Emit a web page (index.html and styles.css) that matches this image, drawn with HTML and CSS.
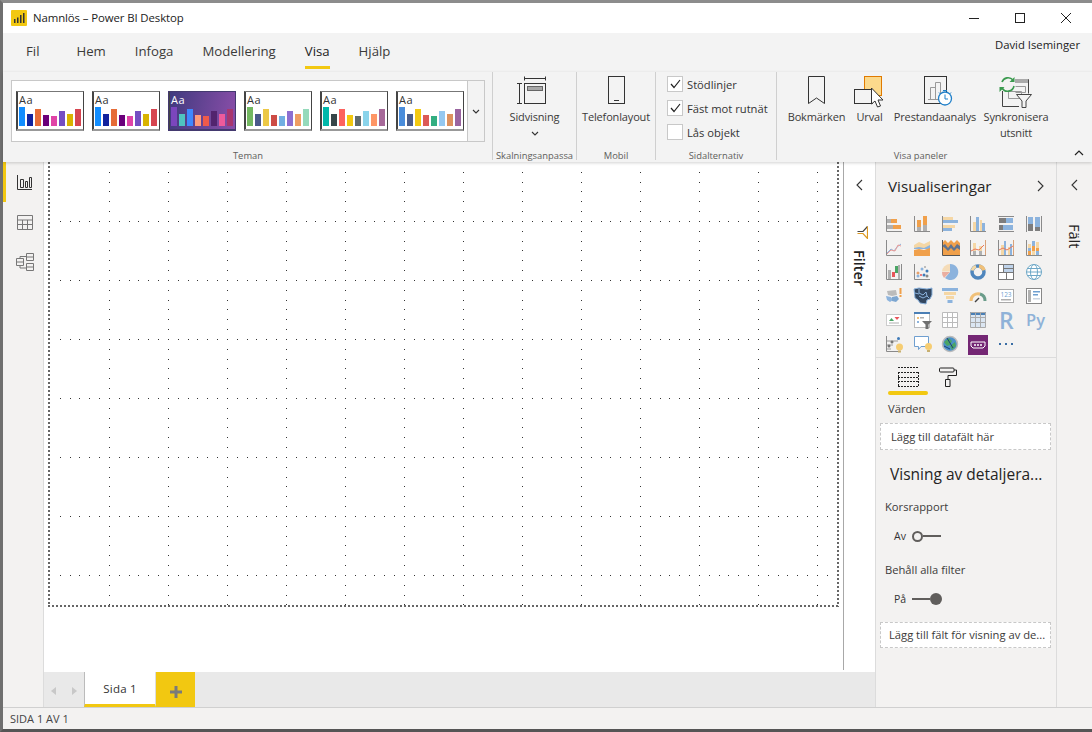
FILE: index.html
```html
<!DOCTYPE html>
<html>
<head>
  <title>Namnlös – Power BI Desktop</title>
  <link rel="stylesheet" href="styles.css">
</head>
<body>
<div class="window">

  <div class="titlebar">
    <svg class="app-logo" width="16" height="16" viewBox="0 0 16 16">
      <rect width="16" height="16" rx="1" fill="#f2c811"/>
      <path d="M3 9h1.500v4H3zM6 7.500h1.500V13H6zM9 5h1.500v8H9zM12 3h1.500v10H12z" fill="#333"/>
    </svg>
    <span class="app-title">Namnlös – Power BI Desktop</span>
    <div class="win-controls">
      <svg width="10" height="10" viewBox="0 0 10 10"><path d="M0 5.500h10" stroke="#222" fill="none"/></svg>
      <svg width="10" height="10" viewBox="0 0 10 10"><rect x=".5" y=".5" width="9" height="9" stroke="#222" fill="none"/></svg>
      <svg width="10" height="10" viewBox="0 0 10 10"><path d="M0 0l10 10M10 0L0 10" stroke="#222" fill="none"/></svg>
    </div>
  </div>

  <div class="tabs">
    <span class="tab tab-file">Fil</span>
    <span class="tab">Hem</span>
    <span class="tab">Infoga</span>
    <span class="tab">Modellering</span>
    <span class="tab active">Visa</span>
    <span class="tab">Hjälp</span>
    <span class="user">David Iseminger</span>
  </div>

  <div class="ribbon">
    <div class="group group-themes">
      <div class="group-body">
        <div class="gallery">
          <div class="gallery-items">
            <div class="thumb">
              <span class="aa">Aa</span>
              <div class="bars">
                <i style="height:19px;background:#118dff"></i><i style="height:12px;background:#12239e"></i><i style="height:17px;background:#e66c37"></i><i style="height:11px;background:#6b007b"></i><i style="height:10px;background:#e044a7"></i><i style="height:15px;background:#744ec2"></i><i style="height:12px;background:#d9b300"></i><i style="height:17px;background:#d64550"></i>
              </div>
            </div>
            <div class="thumb">
              <span class="aa">Aa</span>
              <div class="bars">
                <i style="height:19px;background:#118dff"></i><i style="height:12px;background:#12239e"></i><i style="height:17px;background:#e66c37"></i><i style="height:11px;background:#6b007b"></i><i style="height:10px;background:#e044a7"></i><i style="height:15px;background:#744ec2"></i><i style="height:12px;background:#d9b300"></i><i style="height:17px;background:#d64550"></i>
              </div>
            </div>
            <div class="thumb thumb-dark">
              <span class="aa">Aa</span>
              <div class="bars">
                <i style="height:19px;background:#7b46bd"></i><i style="height:12px;background:#4fc4c0"></i><i style="height:17px;background:#3f88ff"></i><i style="height:11px;background:#ff9a7a"></i><i style="height:10px;background:#ef5a4a"></i><i style="height:15px;background:#52246e"></i><i style="height:12px;background:#ee5a9b"></i><i style="height:17px;background:#a8366e"></i>
              </div>
            </div>
            <div class="thumb">
              <span class="aa">Aa</span>
              <div class="bars">
                <i style="height:19px;background:#73b761"></i><i style="height:12px;background:#4a588a"></i><i style="height:17px;background:#ecc846"></i><i style="height:11px;background:#cd4c46"></i><i style="height:10px;background:#71afe2"></i><i style="height:15px;background:#8d6fd1"></i><i style="height:12px;background:#ee9e64"></i><i style="height:17px;background:#95dabb"></i>
              </div>
            </div>
            <div class="thumb">
              <span class="aa">Aa</span>
              <div class="bars">
                <i style="height:19px;background:#01b8aa"></i><i style="height:12px;background:#374649"></i><i style="height:17px;background:#fd625e"></i><i style="height:11px;background:#f2c80f"></i><i style="height:10px;background:#5f6b6d"></i><i style="height:15px;background:#8ad4eb"></i><i style="height:12px;background:#fe9666"></i><i style="height:17px;background:#a66999"></i>
              </div>
            </div>
            <div class="thumb">
              <span class="aa">Aa</span>
              <div class="bars">
                <i style="height:19px;background:#4a8ddc"></i><i style="height:12px;background:#4c5d8a"></i><i style="height:17px;background:#f3c911"></i><i style="height:11px;background:#dc5b57"></i><i style="height:10px;background:#33ae81"></i><i style="height:15px;background:#95c8f0"></i><i style="height:12px;background:#dd915f"></i><i style="height:17px;background:#9a64a0"></i>
              </div>
            </div>
          </div>
          <div class="gallery-more">
            <svg width="8" height="5" viewBox="0 0 8 5"><path d="M1 1l3 3 3-3" class="chev"/></svg>
          </div>
        </div>
      </div>
      <div class="group-label">Teman</div>
    </div>

    <div class="group group-scale">
      <div class="group-body big-btn">
        <svg class="big-icon icon-scale" width="32" height="32" viewBox="0 0 32 32">
          <path d="M9.500 2.500h21M9.500.5v4M30.500.5v4M4.500 7.500v20M2 7.500h5M2 27.500h5" class="line"/>
          <rect x="9.500" y="7.500" width="21" height="20" class="line"/>
          <rect x="12.500" y="10.500" width="15" height="4" fill="#a8a8a8" stroke="#666"/>
        </svg>
        <span class="big-text">Sidvisning</span>
        <svg class="drop" width="8" height="5" viewBox="0 0 8 5"><path d="M1 1l3 3 3-3" class="chev"/></svg>
      </div>
      <div class="group-label">Skalningsanpassa</div>
    </div>

    <div class="group group-mobile">
      <div class="group-body big-btn">
        <svg class="big-icon" width="17" height="32" viewBox="0 0 17 32">
          <rect x=".5" y=".5" width="16" height="27" class="line"/>
          <path d="M6 24.500h5" class="line"/>
        </svg>
        <span class="big-text">Telefonlayout</span>
      </div>
      <div class="group-label">Mobil</div>
    </div>

    <div class="group group-page">
      <div class="group-body checks">
        <div class="check">
          <span class="box"><svg width="11" height="10" viewBox="0 0 11 10"><path d="M1 5l3 3.500L10 1" stroke="#222" stroke-width="1.200" fill="none"/></svg></span>
          Stödlinjer
        </div>
        <div class="check">
          <span class="box"><svg width="11" height="10" viewBox="0 0 11 10"><path d="M1 5l3 3.500L10 1" stroke="#222" stroke-width="1.200" fill="none"/></svg></span>
          Fäst mot rutnät
        </div>
        <div class="check">
          <span class="box"></span>
          Lås objekt
        </div>
      </div>
      <div class="group-label">Sidalternativ</div>
    </div>

    <div class="group group-panes">
      <div class="group-body pane-btns">
        <div class="big-btn btn-bookmark">
          <svg class="big-icon" width="17" height="32" viewBox="0 0 17 32">
            <path d="M.5.500h16v27l-8-5.500-8 5.500z" class="line"/>
          </svg>
          <span class="big-text">Bokmärken</span>
        </div>
        <div class="big-btn btn-select">
          <svg class="big-icon" width="32" height="32" viewBox="0 0 32 32">
            <rect x="10.500" y=".5" width="17" height="19" fill="#fbd98c" stroke="#e07a00"/>
            <rect x=".5" y="13.500" width="18" height="14" fill="#f3f3f3" stroke="#333"/>
            <path d="M17.500 12v16l3.500-3 2.500 6 3-1-2.500-6 5 0z" fill="#fff" stroke="#333"/>
          </svg>
          <span class="big-text">Urval</span>
        </div>
        <div class="big-btn btn-perf">
          <svg class="big-icon icon-perf" width="30" height="32" viewBox="0 0 30 32">
            <rect x=".5" y=".5" width="22" height="27" fill="#f3f3f3" stroke="#333"/>
            <path d="M6.500 23.500v-12h5v12M11.500 23.500v-17h5v17M4 23.500h15" stroke="#999" fill="none"/>
            <circle cx="21" cy="22.500" r="6.500" fill="#fff" stroke="#1f7fc9" stroke-width="1.300"/>
            <path d="M21 18.500v4.500h3M19 14.500h4M15 16.500l1.500 1.500M27 16.500L25.500 18" stroke="#1f7fc9" fill="none"/>
          </svg>
          <span class="big-text">Prestandaanalys</span>
        </div>
        <div class="big-btn btn-sync">
          <svg class="big-icon" width="34" height="32" viewBox="0 0 34 32">
            <path d="M16 3.500h13.500v14M3.500 15v15.500H20" stroke="#444" fill="none"/>
            <rect x="16" y="3" width="13" height="4" fill="#aaa"/>
            <path d="M16.500 10.500h10v6h-10M9.500 15.500h13v7h-13z" stroke="#999" fill="none"/>
            <path d="M3 6a6.500 6.500 0 0 1 11-2M15 10a6.500 6.500 0 0 1-12 2" stroke="#3a9a4e" stroke-width="1.600" fill="none"/>
            <path d="M15.500 1v5h-5zM.5 16v-5h5z" fill="#3a9a4e"/>
            <path d="M17.500 18.500h15l-5.500 6.500v6.500h-4V25z" fill="#f3f3f3" stroke="#444"/>
          </svg>
          <span class="big-text">Synkronisera<br>utsnitt</span>
        </div>
      </div>
      <div class="group-label">Visa paneler</div>
      <svg class="collapse" width="10" height="6" viewBox="0 0 10 6"><path d="M1 5l4-4 4 4" stroke="#222" stroke-width="1.200" fill="none"/></svg>
    </div>
  </div>

  <div class="main">
    <div class="rail">
      <div class="rail-item current">
        <svg width="15" height="15" viewBox="0 0 15 15"><path d="M.5 0v14.500H15M3.500 4.500h3v8h-3zM8.500 6.500h2v6h-2zM12.500 2.500h2v10h-2z" stroke="#333" fill="none"/></svg>
      </div>
      <div class="rail-item">
        <svg width="16" height="15" viewBox="0 0 16 15"><path d="M.5.500h15v14H.5zM.5 5h15M.5 9.500h15M5.500 5v9.500M10.500 5v9.500" stroke="#777" fill="none"/></svg>
      </div>
      <div class="rail-item">
        <svg width="18" height="18" viewBox="0 0 18 18"><path d="M.5 5.500h7v7h-7zM10.500.5h7v7h-7zM10.500 10.500h7v7h-7zM.5 9h7M10.500 4h7M10.500 14h7M4 5.500V3.500h6.500M4 12.500V15h6.500" stroke="#777" fill="none"/></svg>
      </div>
    </div>

    <div class="center">
      <div class="canvas-row">
        <div class="canvas">
          <div class="report-page">
            <svg class="page-grid" width="100%" height="100%">
              <defs>
                <pattern id="dots" x="58" y="58" width="59" height="59" patternUnits="userSpaceOnUse">
                  <path d="M0 0h1v1H0zM10 0h1v1h-1zM20 0h1v1h-1zM29 0h1v1h-1zM39 0h1v1h-1zM49 0h1v1h-1zM0 10h1v1H0zM0 20h1v1H0zM0 29h1v1H0zM0 39h1v1H0zM0 49h1v1H0z" fill="#333"/>
                </pattern>
              </defs>
              <rect width="100%" height="100%" fill="url(#dots)"/>
            </svg>
          </div>
        </div>
        <div class="filter-pane">
          <svg class="pane-chev" width="7" height="12" viewBox="0 0 7 12"><path d="M6 1L1 6l5 5" class="chev"/></svg>
          <svg class="filter-icon" width="11" height="13" viewBox="0 0 11 13">
            <path d="M.5 5.500H6L10.500.5" stroke="#444" stroke-width="1.200" fill="none"/>
            <path d="M10.500.5v12L6 7.500H.5" stroke="#dd9a22" stroke-width="1.200" fill="none"/>
          </svg>
          <span class="vertical filter-text">Filter</span>
        </div>
      </div>
      <div class="page-tabs">
        <div class="page-nav">
          <svg width="5" height="8" viewBox="0 0 5 8"><path d="M5 0v8L0 4z" fill="#c8c8c8"/></svg>
          <svg width="5" height="8" viewBox="0 0 5 8"><path d="M0 0v8l5-4z" fill="#c8c8c8"/></svg>
        </div>
        <div class="page-tab">Sida 1</div>
        <div class="page-add">
          <svg width="12" height="12" viewBox="0 0 12 12"><path d="M4.500 0h3v4.500H12v3H7.500V12h-3V7.500H0v-3h4.500z" fill="#7a7a7a"/></svg>
        </div>
      </div>
    </div>

    <div class="viz-pane">
      <div class="viz-head">
        <span>Visualiseringar</span>
        <svg width="7" height="12" viewBox="0 0 7 12"><path d="M1 1l5 5-5 5" class="chev"/></svg>
      </div>

      <div class="viz-grid">
        <svg viewBox="0 0 16 16"><path class="ax" d="M.5 0v15.500H16"/><rect class="g" x="1" y="3" width="4" height="4"/><rect class="o" x="5" y="3" width="6" height="4"/><rect class="g" x="1" y="9" width="6" height="4"/><rect class="o" x="7" y="9" width="8" height="4"/></svg>
        <svg viewBox="0 0 16 16"><path class="ax" d="M.5 0v15.500H16"/><rect class="o" x="3" y="4" width="4" height="7"/><rect class="g" x="3" y="11" width="4" height="4"/><rect class="o" x="9" y="0" width="4" height="9"/><rect class="g" x="9" y="9" width="4" height="6"/></svg>
        <svg viewBox="0 0 16 16"><path class="ax" d="M.5 0v16"/><rect class="y" x="1" y="1" width="10" height="3"/><rect class="b" x="1" y="4" width="15" height="3"/><rect class="y" x="1" y="9" width="12" height="3"/><rect class="b" x="1" y="12" width="9" height="3"/></svg>
        <svg viewBox="0 0 16 16"><path class="ax" d="M.5 0v15.500H16"/><rect class="y" x="3" y="6" width="3" height="9"/><rect class="b" x="6" y="1" width="3" height="14"/><rect class="y" x="10" y="4" width="2" height="11"/><rect class="b" x="12" y="7" width="3" height="8"/></svg>
        <svg viewBox="0 0 16 16"><path class="ax" d="M0 .5h16M0 15.500h16"/><rect class="d" x="1" y="2" width="7" height="5"/><rect class="b" x="8" y="2" width="7" height="5"/><rect class="d" x="1" y="9" width="4" height="5"/><rect class="b" x="5" y="9" width="10" height="5"/></svg>
        <svg viewBox="0 0 16 16"><path class="ax" d="M.5 0v16M15.500 0v16"/><rect class="b" x="2" y="1" width="5" height="7"/><rect class="d" x="2" y="8" width="5" height="7"/><rect class="b" x="9" y="1" width="5" height="10"/><rect class="d" x="9" y="11" width="5" height="4"/></svg>

        <svg viewBox="0 0 16 16"><path class="ax" d="M.5 0v15.500H16"/><path d="M1 13l4-4 3 2 3-4 4-3" stroke="#8cb3dd" fill="none"/><path d="M1 14l4-4 4 1 3-6 3 1" stroke="#ec9a94" fill="none"/></svg>
        <svg viewBox="0 0 16 16"><path class="y" d="M0 5l5-3 5 2 6-3v8H0z"/><path class="b" d="M0 8l5-1 5 1 6-3v4H0z"/><path class="o" d="M0 10l5-1 5 1 6-2v8H0z"/></svg>
        <svg viewBox="0 0 18 16" class="wide"><path class="o" d="M0 3l3-3 3 3 3-3 3 3 3-3 3 3v12H0z"/><path class="s" d="M0 6l3-2 3 4 3-4 3 4 3-4 3 2v4l-3-2-3 3-3-3-3 3-3-3z"/><path class="ax dark" d="M.5 0v15.500H18"/></svg>
        <svg viewBox="0 0 16 16"><path class="ax" d="M.5 0v15.500H16"/><path class="axo" d="M15.500 0v15"/><rect class="y" x="3" y="3" width="3" height="8"/><rect class="g" x="3" y="11" width="3" height="4"/><rect class="y" x="9" y="6" width="3" height="5"/><rect class="g" x="9" y="11" width="3" height="4"/><path d="M1 11l4-2 4 1 5-5" stroke="#e9785a" fill="none"/></svg>
        <svg viewBox="0 0 16 16"><path class="ax" d="M.5 0v15.500H16"/><path class="axo" d="M15.500 0v15"/><rect class="y" x="3" y="5" width="3" height="10"/><rect class="b" x="6" y="1" width="2" height="14"/><rect class="y" x="10" y="7" width="2" height="8"/><rect class="b" x="12" y="4" width="2" height="11"/><path d="M1 10l4-2 4 2 6-4" stroke="#e9785a" fill="none"/></svg>
        <svg viewBox="0 0 16 16"><path class="ax" d="M.5 0v15.500H16"/><rect class="y" x="2" y="4" width="3" height="4"/><rect class="b" x="2" y="8" width="3" height="3"/><rect class="o" x="2" y="11" width="3" height="4"/><rect class="b" x="6" y="1" width="3" height="5"/><rect class="o" x="6" y="6" width="3" height="5"/><rect class="y" x="6" y="11" width="3" height="4"/><rect class="y" x="10" y="2" width="3" height="6"/><rect class="o" x="10" y="8" width="3" height="3"/><rect class="b" x="10" y="11" width="3" height="4"/></svg>

        <svg viewBox="0 0 16 16"><path class="ax" d="M.5 0v15.500H16M15.500 0v15"/><rect class="g" x="2" y="6" width="3" height="9"/><rect x="6" y="8" width="3" height="5" fill="#e8555a"/><rect x="9" y="2" width="3" height="7" fill="#4aa564"/><rect class="g" x="12" y="1" width="2" height="14"/></svg>
        <svg viewBox="0 0 16 16"><path class="ax" d="M.5 0v15.500H16"/><circle cx="4" cy="9" r="1.500" fill="#e8a06a"/><circle cx="8" cy="5" r="1.500" fill="#8cb3dd"/><circle cx="10" cy="11" r="1.500" fill="#3f7ab8"/><circle cx="13" cy="7" r="1.500" fill="#3f7ab8"/><circle cx="4" cy="12" r="1.500" fill="#8cb3dd"/><circle cx="11" cy="3" r="1" fill="#aaa"/><circle cx="7" cy="11" r="1" fill="#e8555a"/><circle cx="13" cy="12" r="1.500" fill="#888"/></svg>
        <svg viewBox="0 0 16 16"><path d="M8 0a8 8 0 1 1-5 14l5-6z" fill="#8cb3dd"/><path d="M8 8L2 14a8 8 0 0 1-2-6z" fill="#eaaea0"/><path d="M8 7.500H0a8 8 0 0 1 8-7.500z" fill="#f5dcb8"/></svg>
        <svg viewBox="0 0 16 16"><circle cx="8" cy="8" r="6" fill="none" stroke="#4f86bd" stroke-width="3.500"/><path d="M9 2.200a6 6 0 0 1 5 4" stroke="#f0c078" stroke-width="3.500" fill="none"/><path d="M2.200 6.500A6 6 0 0 1 6 2.300" stroke="#f3d9a6" stroke-width="3" fill="none"/></svg>
        <svg viewBox="0 0 16 16"><rect x=".5" y=".5" width="15" height="15" fill="#fff" stroke="#777"/><rect x="5" y="1" width="10" height="7" fill="#bfd3ea"/><path d="M.5 8.500h15M5.500.5v8M8.500 8.500v7M5 4.500h10" stroke="#777" fill="none"/></svg>
        <svg viewBox="0 0 16 16"><circle cx="8" cy="8" r="7.500" fill="#fff" stroke="#6fa8c7"/><ellipse cx="8" cy="8" rx="3.500" ry="7.500" fill="none" stroke="#6fa8c7"/><path d="M.5 8h15M1.500 4.500h13M1.500 11.500h13" stroke="#6fa8c7" fill="none"/></svg>

        <svg viewBox="0 0 16 16"><path d="M1 3l9-1 1 5-5 1-4-1z" fill="#bbb"/><path d="M0 8l5 1 2 3-3 2-3-2z" fill="#8cb3dd"/><path d="M6 9l5-1 2 3-3 3-4-1z" fill="#7da6d0"/><path d="M13.500 0h2v6h-2zM13.500 7h2v2h-2z" fill="#f0a04b"/></svg>
        <svg viewBox="0 0 18 16" class="wide"><path d="M0 1l5-1 8 1 5-1 0 7-2 4-3 1-1 4-6-1-2-3-3-2z" fill="#33475f" stroke="#8cb3dd"/><path d="M5 1v4l4 2 3-3 1 4-4 2-4-2M1 5l4 1M13 8l2 2" stroke="#8cb3dd" fill="none"/></svg>
        <svg viewBox="0 0 16 16"><rect class="b" x="0" y="0" width="16" height="3"/><rect class="y" x="2" y="4" width="12" height="3"/><rect class="y" x="4" y="8" width="8" height="3"/><rect class="b" x="5.500" y="12" width="5" height="3"/></svg>
        <svg viewBox="0 0 16 16"><path d="M1 13a7 7 0 0 1 9-7" stroke="#f0c078" stroke-width="3" fill="none"/><path d="M10 6a7 7 0 0 1 5 7" stroke="#6a9c8a" stroke-width="3" fill="none"/><path d="M5 14l4-4" stroke="#444" stroke-width="1.500"/></svg>
        <svg viewBox="0 0 16 16"><rect x=".5" y="1.500" width="15" height="13" fill="#fff" stroke="#aaa"/><text x="8" y="8.500" class="card-num">123</text><rect class="g" x="3" y="11" width="10" height="1.500"/></svg>
        <svg viewBox="0 0 16 16"><rect x=".5" y=".5" width="15" height="15" fill="#fff" stroke="#888"/><rect class="g" x="2" y="2" width="3" height="12"/><rect x="7" y="3" width="7" height="1.500" fill="#6f9fd0"/><rect x="7" y="6" width="5" height="1.500" fill="#6f9fd0"/><rect x="7" y="10" width="7" height="1.500" fill="#cbd6e2"/></svg>

        <svg viewBox="0 0 16 16"><rect x=".5" y="2.500" width="15" height="11" fill="#fff" stroke="#ccc"/><path d="M3 9l2.500-3L8 9z" fill="#4aa564"/><path d="M8.500 5h5L11 8z" fill="#e8555a"/><rect class="g" x="3" y="10.500" width="10" height="1"/></svg>
        <svg viewBox="0 0 18 16" class="wide"><rect x=".5" y=".5" width="15" height="15" fill="#fff" stroke="#bbb"/><rect x="0" y="0" width="16" height="2" fill="#4a7fb5"/><rect x="3" y="5" width="2" height="2" fill="#f0c078"/><rect x="3" y="9" width="2" height="2" fill="#8cb3dd"/><rect class="g" x="6" y="5" width="4" height="1.500"/><path d="M8 9h10l-3.500 3.500V17h-3v-4.500z" fill="#707070"/></svg>
        <svg viewBox="0 0 16 16"><path d="M.5.500h15v15H.5zM.5 5.500h15M.5 10.500h15M5.500.5v15M10.500.5v15" stroke="#bbb" fill="#fff"/></svg>
        <svg viewBox="0 0 16 16"><rect x=".5" y=".5" width="15" height="15" fill="#dbe6f2"/><rect x="0" y="0" width="16" height="3" fill="#4a7fb5"/><path d="M.5.500h15v15H.5zM.5 5.500h15M.5 10.500h15M5.500.5v15M10.500.5v15" stroke="#aaa" fill="none"/></svg>
        <span class="viz-r">R</span>
        <span class="viz-py">Py</span>

        <svg viewBox="0 0 18 16" class="wide"><path class="ax" d="M.5 0v15.500H12"/><path d="M1 5h11M1 9h6M1 13h4" stroke="#999"/><circle cx="12.500" cy="2.500" r="1.500" fill="#3f7ab8"/><circle cx="6" cy="6" r="1.500" fill="#777"/><circle cx="3" cy="10" r="1.500" fill="#777"/><circle cx="13.500" cy="11" r="3.500" fill="#f6cd72"/><rect x="12" y="14.500" width="3" height="2" fill="#c8b070"/></svg>
        <svg viewBox="0 0 18 16" class="wide"><path d="M.5.500h14v10H7l-2.500 3v-3h-4z" fill="#fff" stroke="#6f9fd0"/><circle cx="14.500" cy="10.500" r="3.500" fill="#f6cd72"/><rect x="13" y="14" width="3" height="2" fill="#c8b070"/></svg>
        <svg viewBox="0 0 16 16"><circle cx="8" cy="8" r="7.500" fill="#4a90c8" stroke="#bbb" stroke-width="1.500"/><path d="M2 6l5-4 3 3-2 4-3 1zM8 10l5-4 1 4-4 4z" fill="#4aa564"/><path d="M2 10l6 3M5 2l6 10" stroke="#1c3f77" fill="none"/></svg>
        <svg viewBox="0 0 20 20" class="apps"><rect width="20" height="20" fill="#742774"/><path d="M3 7h14v4l-2 2H5l-2-2z" fill="none" stroke="#fff"/><circle cx="7" cy="10" r="1" fill="#fff"/><circle cx="10" cy="10" r="1" fill="#fff"/><circle cx="13" cy="10" r="1" fill="#fff"/></svg>
        <svg viewBox="0 0 16 16"><path d="M1 8h2M7 8h2M13 8h2" stroke="#3a6ea5" stroke-width="2" fill="none"/></svg>
      </div>

      <div class="well-tabs">
        <div class="well-tab active">
          <svg width="21" height="20" viewBox="0 0 21 20"><path d="M0 .5h21M0 5.500h21M0 10.500h21M0 14.500h21M0 19.500h21" stroke="#222" stroke-dasharray="2 1" fill="none"/><path d="M.5 5v15M20.500 5v15" stroke="#222" stroke-dasharray="2 1" fill="none"/></svg>
        </div>
        <div class="well-tab well-tab-format">
          <svg width="18" height="20" viewBox="0 0 18 20"><path d="M1.500 1h12.500a1 1 0 0 1 1 1v2a1 1 0 0 1-1 1H1.500a1 1 0 0 1-1-1V2a1 1 0 0 1 1-1zM15 3h2.500v5.500H9v4M6.500 12.500h4.500v7H6.500z" stroke="#222" fill="none"/></svg>
        </div>
      </div>

      <div class="field-label">Värden</div>
      <div class="drop-well">Lägg till datafält här</div>

      <div class="drill-title">Visning av detaljera...</div>

      <div class="opt-label">Korsrapport</div>
      <div class="toggle">
        <span>Av</span>
        <span class="knob-off"></span>
        <span class="track track-off"></span>
      </div>

      <div class="opt-label">Behåll alla filter</div>
      <div class="toggle">
        <span>På</span>
        <span class="track track-on"></span>
        <span class="knob-on"></span>
      </div>

      <div class="drop-well drill-well">Lägg till fält för visning av de...</div>
    </div>

    <div class="fields-pane">
      <svg class="pane-chev" width="7" height="12" viewBox="0 0 7 12"><path d="M6 1L1 6l5 5" class="chev"/></svg>
      <span class="vertical fields-text">Fält</span>
    </div>
  </div>

  <div class="statusbar">SIDA 1 AV 1</div>
</div>
</body>
</html>
```

FILE: styles.css
```css
html, body {
  margin: 0;
  height: 100%;
  overflow: hidden;
}
body {
  font-family: "Open Sans", "Noto Sans", sans-serif;
  font-size: 11.2px;
  color: #333;
}
svg {
  display: block;
}
.window {
  box-sizing: border-box;
  height: 732px;
  display: flex;
  flex-direction: column;
  border-top: 3px solid #8c8c8c;
  border-left: 3px solid #6f6f6f;
  border-bottom: 3px solid #555;
  background: #f3f3f3;
}

/* title bar */
.titlebar {
  height: 30px;
  flex: none;
  display: flex;
  align-items: center;
  padding-left: 8px;
  background: #fff;
}
.app-title {
  margin-left: 6px;
  padding-bottom: 2px;
  font-size: 11.4px;
  letter-spacing: -.1px;
  color: #222;
}
.win-controls {
  margin-left: auto;
  display: flex;
  gap: 36px;
  padding-right: 21px;
}

/* tabs */
.tabs {
  height: 39px;
  flex: none;
  display: flex;
  align-items: flex-start;
  padding-left: 23px;
  background: #f3f3f3;
}
.tab {
  font-size: 13.2px;
  line-height: 18px;
  padding-top: 9px;
  margin-right: 29px;
  height: 24px;
  color: #3b3a39;
}
.tab-file {
  margin-right: 37px;
}
.tab.active {
  color: #222;
  border-bottom: 3px solid #f2c811;
}
.user {
  margin-left: auto;
  padding: 3px 12px 0 0;
  font-size: 11.3px;
  line-height: 17px;
  color: #222;
}

/* ribbon */
.ribbon {
  height: 90px;
  flex: none;
  display: flex;
  position: relative;
  z-index: 2;
  background: #f3f3f3;
  box-shadow: 0 1px 3px rgba(0, 0, 0, .18);
}
.group {
  display: flex;
  flex-direction: column;
  border-right: 1px solid #cfcfcf;
  margin-bottom: 2px;
  box-sizing: border-box;
}
.group-body {
  flex: 1;
  min-height: 0;
}
.group-label {
  height: 11px;
  line-height: 14px;
  text-align: center;
  font-size: 9.4px;
  color: #605e5c;
  white-space: nowrap;
}
.group-themes {
  width: 490px;
  padding: 8px 7px 0 8px;
}
.group-scale {
  width: 84px;
}
.group-mobile {
  width: 79px;
}
.group-page {
  width: 121px;
}
.group-panes {
  flex: 1;
  border-right: none;
  position: relative;
}
.group-panes .group-label {
  margin-left: -28px;
}
.collapse {
  position: absolute;
  right: 8px;
  bottom: 4px;
}
.gallery {
  height: 62px;
  display: flex;
  box-sizing: border-box;
  background: #fff;
  border: 1px solid #c8c8c8;
}
.gallery-items {
  flex: 1;
  display: flex;
  gap: 8px;
  align-items: center;
  padding-left: 4px;
}
.gallery-more {
  width: 16px;
  display: flex;
  align-items: center;
  justify-content: center;
  background: #f3f3f3;
  border-left: 1px solid #c8c8c8;
}
.thumb {
  box-sizing: border-box;
  width: 68px;
  height: 40px;
  position: relative;
  background: #fff;
  border: 1px solid #444;
  border-top-color: #777;
  border-bottom: 2px solid #999;
  box-shadow: inset 1px 0 #444;
}
.thumb-dark {
  background: linear-gradient(100deg, #3f3a7e, #8a4ea9);
  border-color: #43396f;
}
.aa {
  position: absolute;
  left: 2px;
  top: 1px;
  font-size: 11px;
  line-height: 14px;
  letter-spacing: .5px;
  color: #333;
}
.thumb-dark .aa {
  color: #fff;
}
.bars {
  position: absolute;
  left: 2px;
  bottom: 3px;
  display: flex;
  gap: 2px;
  align-items: flex-end;
}
.bars i {
  display: block;
  width: 6px;
}
.chev {
  stroke: #333;
  stroke-width: 1.100;
  fill: none;
}
.line {
  stroke: #333;
  fill: none;
}

/* big ribbon buttons */
.big-btn {
  display: flex;
  flex-direction: column;
  align-items: center;
  padding-top: 4px;
}
.big-icon {
  flex: none;
  margin-bottom: 1px;
}
.icon-scale {
  margin-right: 7px;
}
.icon-perf {
  margin-left: 8px;
}
.big-text {
  text-align: center;
  line-height: 16px;
  font-size: 11px;
  letter-spacing: -.15px;
  white-space: nowrap;
  color: #3b3a39;
}
.drop {
  margin-top: 6px;
}
.checks {
  display: flex;
  flex-direction: column;
  gap: 8px;
  padding: 4px 0 0 11px;
}
.check {
  display: flex;
  align-items: center;
  gap: 4px;
  height: 16px;
  font-size: 11.2px;
  white-space: nowrap;
}
.box {
  box-sizing: border-box;
  width: 16px;
  height: 16px;
  flex: none;
  display: flex;
  align-items: center;
  justify-content: center;
  background: #fff;
  border: 1px solid #c8c8c8;
}
.pane-btns {
  display: flex;
  padding-left: 11px;
}
.btn-bookmark {
  width: 57px;
  margin-right: 11px;
}
.btn-select {
  width: 27px;
  margin-right: 11px;
}
.btn-perf {
  width: 82px;
  margin-right: 7px;
}
.btn-sync {
  width: 66px;
}

/* main area */
.main {
  flex: 1;
  min-height: 0;
  display: flex;
}
.rail {
  width: 40px;
  flex: none;
  background: #f3f2f1;
  border-right: 1px solid #dcdcdc;
}
.rail-item {
  height: 40px;
  display: flex;
  align-items: center;
  justify-content: center;
  box-sizing: border-box;
  border-left: 3px solid transparent;
}
.rail-item.current {
  border-left-color: #f2c811;
}
.center {
  flex: 1;
  min-width: 0;
  display: flex;
  flex-direction: column;
}
.canvas-row {
  flex: 1;
  min-height: 0;
  display: flex;
  background: #fff;
  padding-bottom: 2px;
}
.canvas {
  flex: 1;
  min-width: 0;
  padding-left: 4px;
}
.report-page {
  box-sizing: border-box;
  width: 791px;
  height: 445px;
  padding: 1px 2px 2px 3px;
  background-image:
    repeating-linear-gradient(to bottom, #666 0 2px, transparent 2px 4px),
    repeating-linear-gradient(to bottom, #666 0 2px, transparent 2px 4px),
    repeating-linear-gradient(to right, #666 0 2px, transparent 2px 4px);
  background-size: 2px 100%, 2px 100%, 100% 2px;
  background-position: left top, right top, left bottom;
  background-repeat: no-repeat;
}
.filter-pane {
  width: 32px;
  flex: none;
  box-sizing: border-box;
  background: #fff;
  border-left: 1px solid #a8a8a8;
  display: flex;
  flex-direction: column;
  align-items: center;
}
.pane-chev {
  margin-top: 17px;
}
.filter-icon {
  margin-top: 35px;
  margin-left: 6px;
}
.vertical {
  writing-mode: vertical-rl;
  white-space: nowrap;
}
.filter-text {
  margin-top: 11px;
  font-size: 14.5px;
  font-weight: 600;
  color: #222;
}
.page-tabs {
  height: 35px;
  flex: none;
  display: flex;
  background: #e9e9e9;
}
.page-nav {
  width: 40px;
  display: flex;
  align-items: center;
  justify-content: center;
  gap: 16px;
  padding-top: 2px;
  box-sizing: border-box;
}
.page-tab {
  width: 72px;
  box-sizing: border-box;
  text-align: center;
  line-height: 34px;
  font-size: 11.5px;
  letter-spacing: .2px;
  background: #fff;
  border-left: 1px solid #bbb;
  border-right: 1px solid #ddd;
  border-bottom: 3px solid #f2c811;
}
.page-add {
  width: 39px;
  display: flex;
  align-items: center;
  justify-content: center;
  padding-top: 5px;
  box-sizing: border-box;
  background: #f2c811;
}
.statusbar {
  height: 22px;
  flex: none;
  box-sizing: border-box;
  border-top: 1px solid #d0d0d0;
  padding-left: 7px;
  line-height: 22px;
  font-size: 11px;
  color: #444;
  background: #f3f2f1;
}

/* visualizations pane */
.viz-pane {
  width: 181px;
  flex: none;
  box-sizing: border-box;
  background: #f3f2f1;
  border-left: 1px solid #dcdcdc;
  display: flex;
  flex-direction: column;
}
.viz-head {
  height: 48px;
  flex: none;
  display: flex;
  align-items: center;
  justify-content: space-between;
  padding: 0 12px 0 12px;
  font-size: 15.2px;
  color: #252423;
  box-sizing: border-box;
}
.viz-grid {
  display: grid;
  grid-template-columns: repeat(6, 28px);
  grid-auto-rows: 24px;
  padding: 6px 0 0 10px;
  height: 148px;
  flex: none;
  box-sizing: border-box;
  border-bottom: 1px solid #dcdcdc;
}
.viz-grid svg {
  width: 16px;
  height: 16px;
  overflow: visible;
}
.viz-grid svg.wide {
  width: 18px;
  height: 16px;
}
.viz-grid svg.apps {
  width: 20px;
  height: 20px;
  margin: -1px 0 0 -2px;
}
.ax {
  stroke: #8a8a8a;
  fill: none;
}
.ax.dark {
  stroke: #555;
}
.axo {
  stroke: #d9a27a;
  fill: none;
}
.o {
  fill: #f0a04b;
}
.b {
  fill: #8cb3dd;
}
.y {
  fill: #f5d7a5;
}
.g {
  fill: #b0b0b0;
}
.d {
  fill: #7d7d7d;
}
.s {
  fill: #5f7490;
}
.card-num {
  font-size: 6.500px;
  text-anchor: middle;
  fill: #6f9fd0;
}
.viz-r, .viz-py {
  font-weight: 600;
  line-height: 16px;
  color: #8fb2d8;
}
.viz-r {
  font-size: 23px;
  margin-left: 1px;
}
.viz-py {
  font-size: 16.5px;
}
.well-tabs {
  display: flex;
  flex: none;
  padding: 9px 0 0 12px;
  height: 35px;
}
.well-tab {
  width: 40px;
  height: 28px;
  display: flex;
  justify-content: center;
  margin-right: 11px;
}
.well-tab.active {
  position: relative;
}
.well-tab.active::after {
  content: "";
  position: absolute;
  left: 0;
  right: 0;
  bottom: 0;
  height: 4px;
  border-radius: 2px;
  background: #f2c811;
}
.well-tab-format {
  width: 18px;
}
.field-label {
  margin: 0 0 2px 12px;
  line-height: 14px;
  color: #3b3a39;
}
.drop-well {
  margin: 5px 5px 0 4px;
  height: 27px;
  box-sizing: border-box;
  background: #fff;
  border: 1px dashed #c8c8c8;
  padding-left: 10px;
  line-height: 25px;
  white-space: nowrap;
  overflow: hidden;
  color: #3b3a39;
}
.drill-title {
  margin: 13px 0 2px 14px;
  font-size: 15.5px;
  line-height: 22px;
  color: #252423;
  white-space: nowrap;
}
.opt-label {
  margin: 12px 0 0 9px;
  line-height: 16px;
  color: #3b3a39;
}
.toggle {
  display: flex;
  align-items: center;
  margin: 7px 0 0 18px;
  height: 28px;
  font-size: 10.5px;
}
.toggle span:first-child {
  width: 18px;
}
.knob-off {
  box-sizing: border-box;
  width: 11px;
  height: 11px;
  border-radius: 50%;
  border: 2px solid #605e5c;
}
.track {
  height: 2px;
  background: #605e5c;
}
.track-off {
  width: 18px;
}
.track-on {
  width: 18px;
}
.knob-on {
  width: 12px;
  height: 12px;
  border-radius: 50%;
  background: #605e5c;
}
.drill-well {
  margin-top: 9px;
  height: 26px;
  padding-left: 8px;
  line-height: 24px;
}

/* fields pane */
.fields-pane {
  width: 36px;
  flex: none;
  box-sizing: border-box;
  background: #f3f2f1;
  border-left: 1px solid #dcdcdc;
  display: flex;
  flex-direction: column;
  align-items: center;
}
.fields-text {
  margin-top: 33px;
  font-size: 14.5px;
  color: #252423;
}
```
